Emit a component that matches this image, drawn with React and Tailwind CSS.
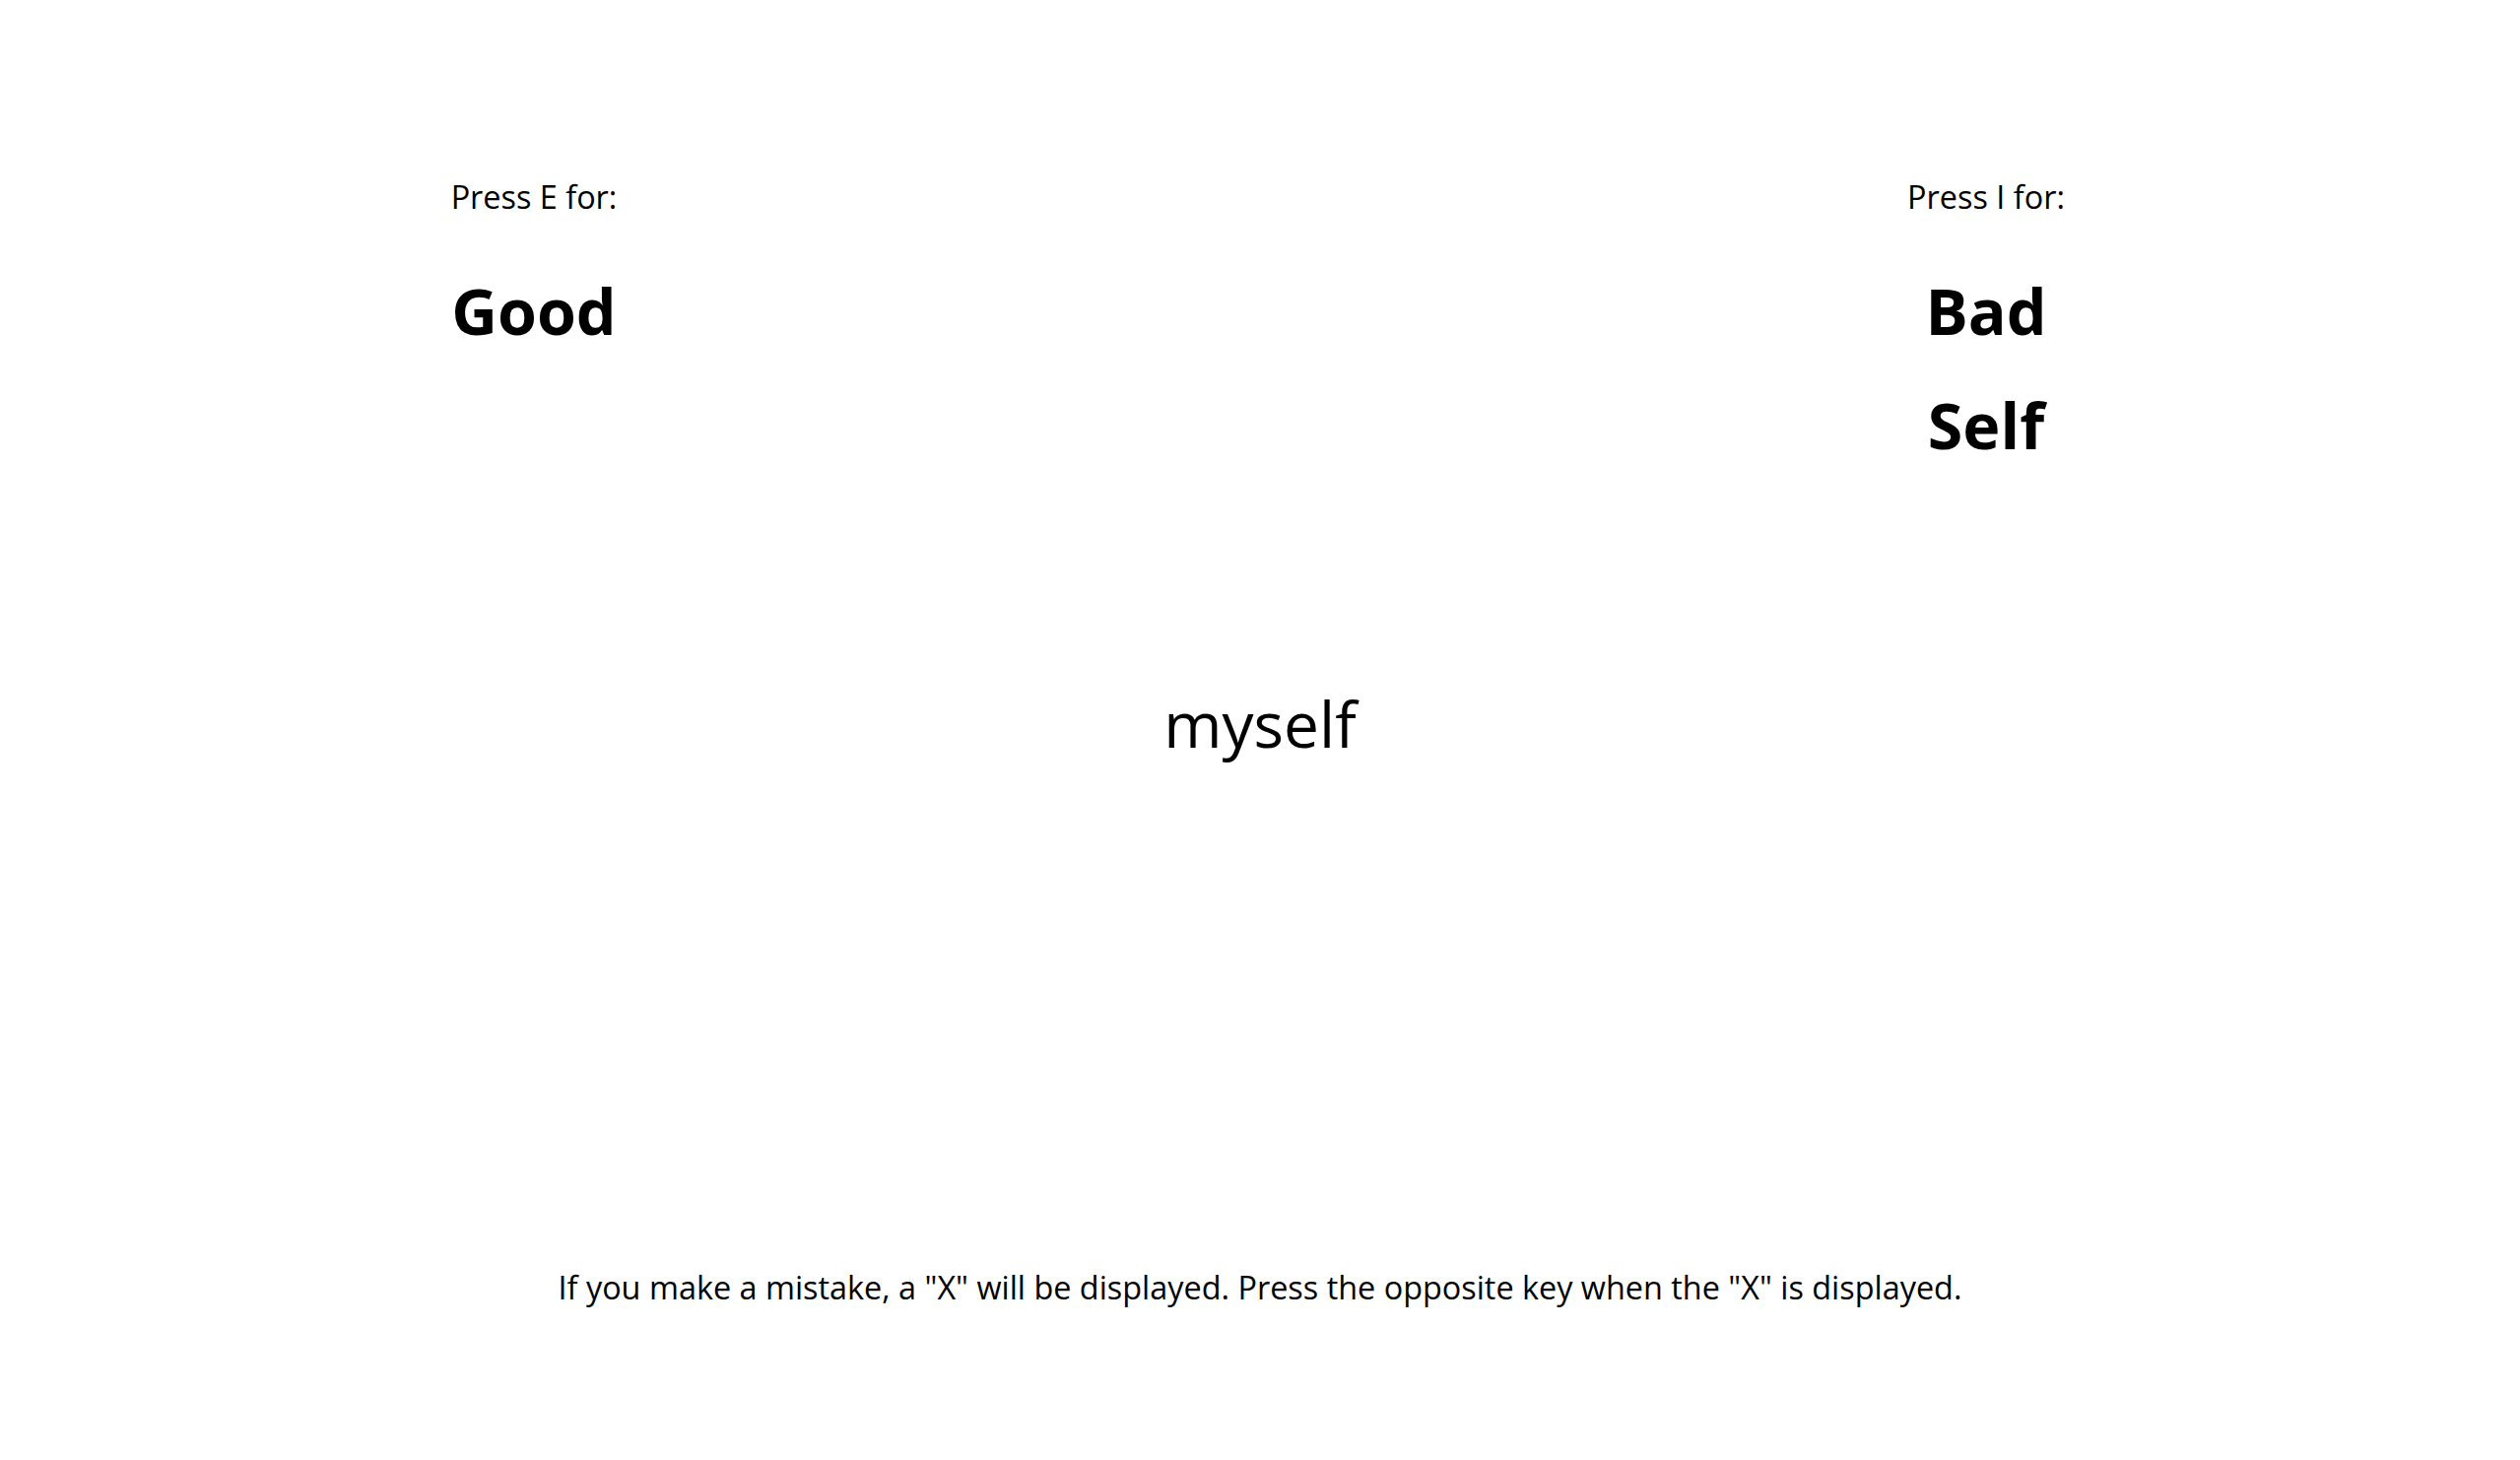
import React from 'react';

const left = { key: 'E', labels: ['Good'] };
const right = { key: 'I', labels: ['Bad', 'Self'] };

function KeyColumn({ side }) {
    return (
        <div className="flex w-[400px] flex-col items-center text-center">
            <p className="text-[32.4px]">Press {side.key} for:</p>
            <div className="mt-[43px] flex flex-col gap-[20px]">
                {side.labels.map((label) => (
                    <p key={label} className="text-[64.5px] font-bold">{label}</p>
                ))}
            </div>
        </div>
    );
}

export default function App() {
    return (
        <div className="min-h-screen bg-white text-black font-['Open_Sans',sans-serif] leading-normal">
            {/* category labels */}
            <div className="mx-auto flex w-[1874px] justify-between pt-[175px]">
                <KeyColumn side={left} />
                <KeyColumn side={right} />
            </div>

            {/* stimulus */}
            <p className="mt-[207px] text-center text-[64px]">myself</p>

            {/* error hint */}
            <p className="mt-[499px] text-center text-[32.4px]">
                If you make a mistake, a "X" will be displayed. Press the opposite key when the "X" is displayed.
            </p>
        </div>
    );
}
